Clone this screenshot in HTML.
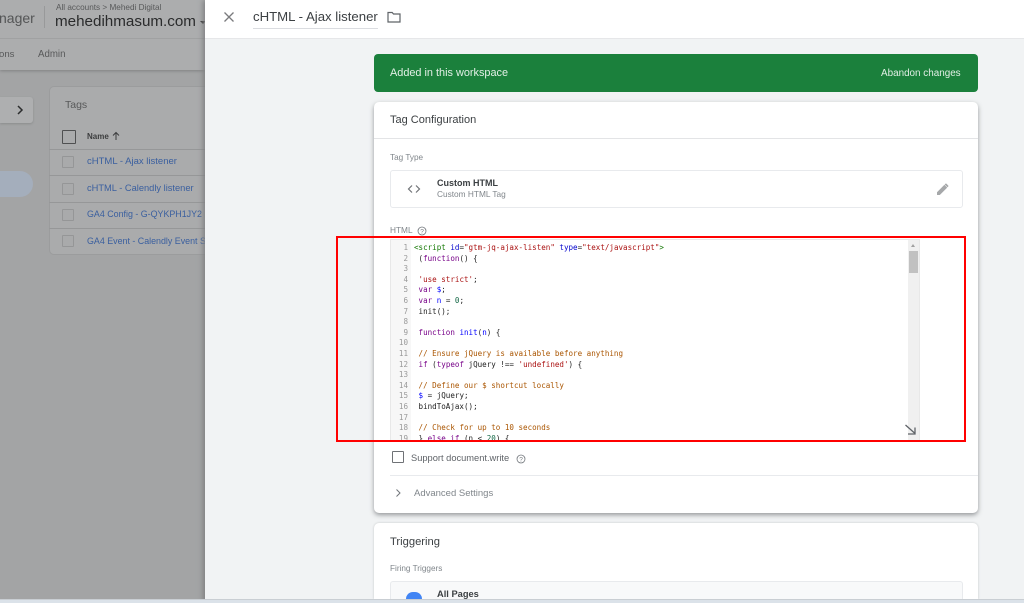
<!DOCTYPE html>
<html><head><meta charset="utf-8"><style>
html,body{margin:0;padding:0;width:1024px;height:603px;overflow:hidden}
body{position:relative;background:#a3a4a5;font-family:"Liberation Sans",sans-serif}
#w{position:absolute;left:0;top:0;width:1024px;height:603px;overflow:hidden}
.a{position:absolute;white-space:nowrap}
.cb{position:absolute;box-sizing:border-box;width:12px;height:12px;left:62px;border:1px solid #959697;background:#a9aaab;border-radius:1px}
.lk{position:absolute;left:87px;font-size:9.3px;color:#3a5f9f;white-space:nowrap;line-height:12px;width:118px;overflow:hidden}
.ln{position:absolute;left:49px;width:156px;height:1px;background:#969798}
.code{position:absolute;left:414px;font:7.55px/10.6px "DejaVu Sans Mono","Liberation Mono",monospace;color:#222;white-space:pre}
.num{position:absolute;left:392px;width:16px;text-align:right;font:7.55px/10.6px "DejaVu Sans Mono","Liberation Mono",monospace;color:#999}
.k{color:#708}.d{color:#00f}.s{color:#a11}.c{color:#a50}.t{color:#170}.at{color:#00c}.n{color:#164}
</style></head><body><div id="w">
<!-- background app -->
<div class="a" style="left:0;top:0;width:205px;height:70px;background:#acadae;box-shadow:0 1px 3px #808182"></div>
<div class="a" style="left:0;top:38px;width:205px;height:1px;background:#a0a1a2"></div>
<div class="a" style="left:-1px;top:10px;font-size:14px;line-height:16px;color:#545556">nager</div>
<div class="a" style="left:44px;top:6px;width:1px;height:22px;background:#98999a"></div>
<div class="a" style="left:56px;top:3px;font-size:8.2px;line-height:10px;color:#58595a">All accounts &gt; Mehedi Digital</div>
<div class="a" style="left:55px;top:13px;font-size:15.2px;line-height:18px;color:#2a2b2c">mehedihmasum.com</div>
<div class="a" style="left:200px;top:21px;width:0;height:0;border:3px solid transparent;border-top:3px solid #333"></div>
<div class="a" style="left:-1px;top:49px;font-size:9.6px;line-height:11px;color:#58595a">ons</div>
<div class="a" style="left:38px;top:49px;font-size:9.7px;line-height:11px;color:#58595a">Admin</div>
<div class="a" style="left:0;top:97px;width:33px;height:26px;background:#aeafb0;border-radius:0 3px 3px 0;box-shadow:0 1px 2px #8b8c8d"></div>
<svg class="a" style="left:15px;top:104px" width="10" height="12" viewBox="0 0 10 12"><path d="M3 2l4 4-4 4" fill="none" stroke="#2c2d2e" stroke-width="1.5"/></svg>
<div class="a" style="left:0;top:171px;width:33px;height:26px;background:#a4aebc;border-radius:0 13px 13px 0"></div>
<div class="a" style="left:49px;top:86px;width:156px;height:169px;background:#aaabac;border:1px solid #9b9c9d;border-right:0;box-sizing:border-box;border-radius:5px 0 0 5px"></div>
<div class="a" style="left:65px;top:99px;font-size:10.5px;line-height:13px;color:#58595a">Tags</div>
<div class="a" style="left:61.5px;top:129.5px;width:12px;height:12px;border:1.5px solid #4f5051;border-radius:1px"></div>
<div class="a" style="left:87px;top:131px;font-size:8px;font-weight:bold;line-height:12px;color:#3c3d3e">Name</div>
<svg class="a" style="left:111px;top:131px" width="10" height="10" viewBox="0 0 10 10"><path d="M5 9V2M2 4.5L5 1.5l3 3" fill="none" stroke="#3c3d3e" stroke-width="1"/></svg>
<div class="ln" style="top:149px"></div><div class="ln" style="top:175px"></div><div class="ln" style="top:202px"></div><div class="ln" style="top:228px"></div>
<div class="cb" style="top:156px"></div><div class="cb" style="top:183px"></div><div class="cb" style="top:209px"></div><div class="cb" style="top:235px"></div>
<div class="lk" style="top:156px;font-size:9.5px">cHTML - Ajax listener</div>
<div class="lk" style="top:182px">cHTML - Calendly listener</div>
<div class="lk" style="top:208px;font-size:8.9px">GA4 Config - G-QYKPH1JY2</div>
<div class="lk" style="top:235px;font-size:8.9px">GA4 Event - Calendly Event S</div>
<!-- panel -->
<div class="a" style="left:205px;top:0;width:819px;height:603px;background:#f1f3f4;box-shadow:-2px 0 5px #7f8081"></div>
<div class="a" style="left:205px;top:0;width:819px;height:38px;background:#fff;border-bottom:1px solid #e6e7e9"></div>
<svg class="a" style="left:222px;top:10px" width="14" height="14" viewBox="0 0 14 14"><path d="M2.5 2.5l9 9M11.5 2.5l-9 9" stroke="#7a7b7d" stroke-width="1.3" fill="none"/></svg>
<div class="a" style="left:253px;top:9px;font-size:13.2px;line-height:16px;color:#3c4043;width:125px;height:19px;border-bottom:1px solid #dadce0">cHTML - Ajax listener</div>
<svg class="a" style="left:387px;top:11px" width="14" height="12" viewBox="0 0 14 12"><path d="M1 1.5h4.2l1.3 1.5H13v8H1z" fill="none" stroke="#5f6368" stroke-width="1.2"/></svg>
<!-- banner -->
<div class="a" style="left:374px;top:54px;width:604px;height:38px;background:#1b803c;border-radius:4px"></div>
<div class="a" style="left:390px;top:66px;font-size:10.9px;line-height:14px;color:#e2efe6">Added in this workspace</div>
<div class="a" style="left:881px;top:67px;font-size:9.9px;line-height:14px;color:#e2efe6">Abandon changes</div>
<!-- config card -->
<div class="a" style="left:374px;top:102px;width:604px;height:411px;background:#fff;border-radius:5px;box-shadow:0 2px 5px rgba(60,64,67,.5)"></div>
<div class="a" style="left:390px;top:113px;font-size:11px;line-height:15px;color:#3c4043">Tag Configuration</div>
<div class="a" style="left:374px;top:138px;width:604px;height:1px;background:#e3e4e6"></div>
<div class="a" style="left:390px;top:152px;font-size:8.2px;line-height:11px;color:#80868b">Tag Type</div>
<div class="a" style="left:390px;top:170px;width:573px;height:38px;box-sizing:border-box;border:1px solid #e8eaed;border-radius:3px"></div>
<svg class="a" style="left:406px;top:183px" width="16" height="12" viewBox="0 0 16 12"><path d="M6 2.5L2.5 6 6 9.500M10 2.500L13.500 6 10 9.500" fill="none" stroke="#6f7276" stroke-width="1.200"/></svg>
<div class="a" style="left:437px;top:177px;font-size:9px;font-weight:bold;line-height:12px;color:#3c4043">Custom HTML</div>
<div class="a" style="left:437px;top:188px;font-size:8.300px;line-height:12px;color:#80868b">Custom HTML Tag</div>
<svg class="a" style="left:935px;top:181px" width="16" height="16" viewBox="0 0 16 16"><path d="M2 11.200V14h2.800l7.400-7.400-2.800-2.800zM13.200 5.600a.8.8 0 000-1.100l-1.700-1.700a.8.8 0 00-1.100 0L9.700 3.500l2.800 2.800z" fill="#a6a8aa"/></svg>
<div class="a" style="left:390px;top:225px;font-size:8.300px;line-height:11px;color:#80868b">HTML</div>
<svg class="a" style="left:417px;top:226px" width="10" height="10" viewBox="0 0 10 10"><circle cx="5" cy="5" r="4" fill="none" stroke="#70757a" stroke-width=".8"/><text x="5" y="7.400" font-size="6.500" text-anchor="middle" fill="#70757a" font-family="Liberation Sans">?</text></svg>
<!-- editor -->
<div class="a" style="left:390px;top:239px;width:530px;height:201px;background:#fff;border:1px solid #e8e8e8;border-bottom:0;box-sizing:border-box"></div>
<div class="a" style="left:391px;top:240px;width:20px;height:200px;background:#f7f7f7"></div>
<div class="a" style="left:908px;top:240px;width:11px;height:200px;background:#f0f0f0"></div>
<div class="a" style="left:909px;top:251px;width:9px;height:22px;background:#c1c1c1"></div>
<div class="a" style="left:911px;top:244px;width:0;height:0;border:2.500px solid transparent;border-bottom:3px solid #a0a0a0;border-top:0"></div>
<svg class="a" style="left:904px;top:424px" width="13" height="12" viewBox="0 0 13 12"><path d="M1.500 1l9 8M11 3.500V10H4" fill="none" stroke="#5f6368" stroke-width="1.300"/></svg>
<div style="position:absolute;left:0;top:243px;width:1024px;height:197px;overflow:hidden">
<div class="num" style="top:0">1</div><div class="code" style="top:0"><span class="t">&lt;script</span> <span class="at">id</span>=<span class="s">"gtm-jq-ajax-listen"</span> <span class="at">type</span>=<span class="s">"text/javascript"</span><span class="t">&gt;</span></div>
<div class="num" style="top:10.600px">2</div><div class="code" style="top:10.600px"> (<span class="k">function</span>() {</div>
<div class="num" style="top:21.200px">3</div>
<div class="num" style="top:31.800px">4</div><div class="code" style="top:31.800px"> <span class="s">'use strict'</span>;</div>
<div class="num" style="top:42.400px">5</div><div class="code" style="top:42.400px"> <span class="k">var</span> <span class="d">$</span>;</div>
<div class="num" style="top:53px">6</div><div class="code" style="top:53px"> <span class="k">var</span> <span class="d">n</span> = <span class="n">0</span>;</div>
<div class="num" style="top:63.600px">7</div><div class="code" style="top:63.600px"> init();</div>
<div class="num" style="top:74.200px">8</div>
<div class="num" style="top:84.800px">9</div><div class="code" style="top:84.800px"> <span class="k">function</span> <span class="d">init</span>(<span class="d">n</span>) {</div>
<div class="num" style="top:95.400px">10</div>
<div class="num" style="top:106px">11</div><div class="code" style="top:106px"> <span class="c">// Ensure jQuery is available before anything</span></div>
<div class="num" style="top:116.600px">12</div><div class="code" style="top:116.600px"> <span class="k">if</span> (<span class="k">typeof</span> jQuery !== <span class="s">'undefined'</span>) {</div>
<div class="num" style="top:127.200px">13</div>
<div class="num" style="top:137.800px">14</div><div class="code" style="top:137.800px"> <span class="c">// Define our $ shortcut locally</span></div>
<div class="num" style="top:148.400px">15</div><div class="code" style="top:148.400px"> <span class="d">$</span> = jQuery;</div>
<div class="num" style="top:159px">16</div><div class="code" style="top:159px"> bindToAjax();</div>
<div class="num" style="top:169.600px">17</div>
<div class="num" style="top:180.200px">18</div><div class="code" style="top:180.200px"> <span class="c">// Check for up to 10 seconds</span></div>
<div class="num" style="top:190.800px">19</div><div class="code" style="top:190.800px"> } <span class="k">else if</span> (n &lt; <span class="n">20</span>) {</div>
</div>
<!-- red box -->
<div class="a" style="left:336px;top:236px;width:630px;height:206px;box-sizing:border-box;border:2px solid #f00"></div>
<!-- below -->
<div class="a" style="left:392px;top:451px;width:12px;height:12px;box-sizing:border-box;border:1.500px solid #6f7276;border-radius:1px"></div>
<div class="a" style="left:411px;top:452px;font-size:9.300px;line-height:12px;color:#5f6368">Support document.write</div>
<svg class="a" style="left:516px;top:454px" width="10" height="10" viewBox="0 0 10 10"><circle cx="5" cy="5" r="4" fill="none" stroke="#70757a" stroke-width=".8"/><text x="5" y="7.400" font-size="6.500" text-anchor="middle" fill="#70757a" font-family="Liberation Sans">?</text></svg>
<div class="a" style="left:390px;top:475px;width:588px;height:1px;background:#e8eaed"></div>
<svg class="a" style="left:393px;top:488px" width="10" height="10" viewBox="0 0 10 10"><path d="M3.500 1.500L7 5 3.500 8.500" fill="none" stroke="#70757a" stroke-width="1"/></svg>
<div class="a" style="left:414px;top:488px;font-size:9.500px;line-height:12px;color:#80868b">Advanced Settings</div>
<!-- triggering -->
<div class="a" style="left:374px;top:523px;width:604px;height:76px;background:#fff;border-radius:5px 5px 0 0;box-shadow:0 0 2px rgba(60,64,67,.25)"></div>
<div class="a" style="left:390px;top:535px;font-size:11.200px;line-height:15px;color:#3c4043">Triggering</div>
<div class="a" style="left:390px;top:563px;font-size:8.200px;line-height:11px;color:#80868b">Firing Triggers</div>
<div class="a" style="left:390px;top:581px;width:573px;height:18px;box-sizing:border-box;background:#f8f9fa;border:1px solid #e8eaed;border-bottom:0;border-radius:3px 3px 0 0"></div>
<div class="a" style="left:406px;top:592px;width:16px;height:7px;border-radius:8px 8px 0 0;background:#4285f4"></div>
<div class="a" style="left:437px;top:588px;font-size:9.300px;font-weight:bold;line-height:12px;color:#3c4043">All Pages</div>
<!-- bottom strip -->
<div class="a" style="left:0;top:599px;width:1024px;height:4px;background:#dbe2e9;border-top:1px solid #c9ced3;box-sizing:border-box"></div>
</div></body></html>
